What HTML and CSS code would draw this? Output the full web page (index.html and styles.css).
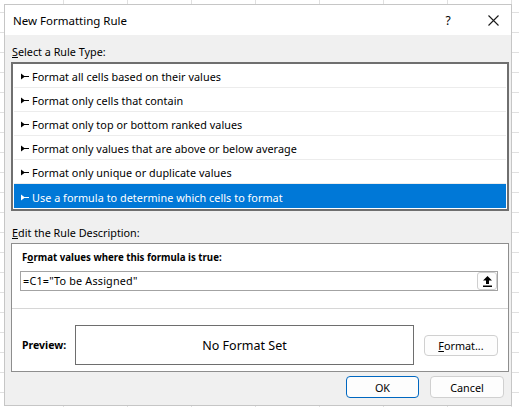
FILE: index.html
```html
<!DOCTYPE html>
<html>
<head>
<meta charset="utf-8">
<link rel="stylesheet" href="styles.css">
</head>
<body>
<div class="dialog">
  <div class="titlebar">
    <span class="title">New Formatting Rule</span>
    <span class="help">?</span>
    <span class="close"><svg width="11" height="11" viewBox="0 0 11 11"><path d="M0.5 0.5 L10.5 10.5 M10.5 0.5 L0.5 10.5" stroke="#1a1a1a" stroke-width="1.1" fill="none"/></svg></span>
  </div>
  <div class="label l1"><u>S</u>elect a Rule Type:</div>
  <ul class="list">
    <li><svg class="pin" width="8" height="7" viewBox="0 0 8 7"><path d="M0 0.5 L4 3.5 L0 6.5 Z M0 3 H8 V4 H0 Z"/></svg>Format all cells based on their values</li>
    <li><svg class="pin" width="8" height="7" viewBox="0 0 8 7"><path d="M0 0.5 L4 3.5 L0 6.5 Z M0 3 H8 V4 H0 Z"/></svg>Format only cells that contain</li>
    <li><svg class="pin" width="8" height="7" viewBox="0 0 8 7"><path d="M0 0.5 L4 3.5 L0 6.5 Z M0 3 H8 V4 H0 Z"/></svg>Format only top or bottom ranked values</li>
    <li><svg class="pin" width="8" height="7" viewBox="0 0 8 7"><path d="M0 0.5 L4 3.5 L0 6.5 Z M0 3 H8 V4 H0 Z"/></svg>Format only values that are above or below average</li>
    <li><svg class="pin" width="8" height="7" viewBox="0 0 8 7"><path d="M0 0.5 L4 3.5 L0 6.5 Z M0 3 H8 V4 H0 Z"/></svg>Format only unique or duplicate values</li>
    <li class="sel"><svg class="pin" width="8" height="7" viewBox="0 0 8 7"><path d="M0 0.5 L4 3.5 L0 6.5 Z M0 3 H8 V4 H0 Z"/></svg>Use a formula to determine which cells to format</li>
  </ul>
  <div class="label l2"><u>E</u>dit the Rule Description:</div>
  <div class="group">
    <div class="top">
      <div class="bold cond">F<u>o</u>rmat values where this formula is true:</div>
      <div class="input">
        <span class="formula">=C1="To be Assigned"</span>
        <span class="ref"><svg width="9" height="11" viewBox="0 0 9 11"><path d="M4.5 0 L9 4.5 L6 4.5 L6 8 L3 8 L3 4.5 L0 4.5 Z M0 9.6 H9 V11 H0 Z" fill="#000"/></svg></span>
      </div>
    </div>
    <div class="preview-row">
      <span class="bold plabel">Preview:</span>
      <div class="preview">No Format Set</div>
      <span class="btn fmt"><u>F</u>ormat...</span>
    </div>
  </div>
  <div class="actions">
    <span class="btn ok">OK</span>
    <span class="btn cancel">Cancel</span>
  </div>
</div>
</body>
</html>
```
FILE: styles.css
```css
html, body {
  margin: 0;
  padding: 0;
}
body {
  width: 519px;
  height: 407px;
  overflow: hidden;
  background-color: #ffffff;
  background-image:
    linear-gradient(#e0e0e0 1px, transparent 1px),
    linear-gradient(90deg, #e0e0e0 1px, transparent 1px);
  background-size: 64px 20px, 64px 20px;
  background-position: 0 12px, 63px 0;
  font-family: "Noto Sans", "Open Sans", sans-serif;
  color: #000;
}
.dialog {
  box-sizing: border-box;
  margin: 4px 0 0 4px;
  width: 508px;
  height: 402px;
  border: 1px solid #c6c6c6;
  background: #f0f0f0;
  display: flex;
  flex-direction: column;
}
.titlebar {
  height: 30px;
  flex: none;
  background: #ffffff;
  display: flex;
  align-items: center;
}
.title {
  flex: 1;
  padding-left: 8px;
  font-size: 11.5px;
}
.help {
  width: 30px;
  text-align: center;
  font-size: 12px;
  margin-right: 12px;
}
.close {
  width: 36px;
  display: flex;
  justify-content: center;
}
.label {
  font-size: 10.8px;
  line-height: 16px;
  padding-left: 7px;
}
.l1 { margin-top: 9px; }
.l2 { margin-top: 14px; }
.list {
  list-style: none;
  margin: 2px 0 0 6px;
  padding: 0 1px 1px;
  width: 498px;
  box-sizing: border-box;
  border: 2px solid #6f6f6f;
  background: #ffffff;
}
.list li {
  box-sizing: border-box;
  height: 24px;
  padding: 2px 0 0 7px;
  border-bottom: 1px solid #ececec;
  display: flex;
  align-items: center;
  gap: 3px;
  font-size: 10.8px;
  line-height: 21px;
  letter-spacing: 0.05px;
  white-space: nowrap;
}
.list li:last-child { border-bottom: none; }
.pin { flex: none; fill: #000; }
.list li.sel {
  background: #0078d7;
  color: #ffffff;
}
.list li.sel .pin { fill: #ffffff; }
.group {
  margin: 2px 0 0 6px;
  width: 498px;
  box-sizing: border-box;
  border: 1px solid #8e8e8e;
  background: #ffffff;
}
.top {
  padding: 6px 10px 17px 8px;
}
.bold {
  font-weight: 700;
  font-size: 10.5px;
  line-height: 16px;
}
.cond {
  font-size: 9.7px;
}
.top .bold { padding-left: 2px; }
.input {
  margin-top: 5px;
  height: 20px;
  box-sizing: border-box;
  border: 1px solid #a3a3a3;
  display: flex;
  align-items: center;
  justify-content: space-between;
  padding-left: 2px;
}
.formula {
  font-size: 10.8px;
  line-height: 18px;
  letter-spacing: 0.2px;
}
.ref {
  box-sizing: border-box;
  width: 20px;
  height: 18px;
  border: 1px solid #cfcfcf;
  border-radius: 3px;
  background: #fdfdfd;
  display: flex;
  align-items: center;
  justify-content: center;
}
.preview-row {
  border-top: 1px solid #d6d6d6;
  padding: 16px 10px 6px 10px;
  display: flex;
  align-items: center;
}
.plabel {
  width: 53px;
  flex: none;
}
.preview {
  box-sizing: border-box;
  width: 339px;
  height: 40px;
  border: 1px solid #6e6e6e;
  display: flex;
  align-items: center;
  justify-content: center;
  font-size: 12.5px;
  margin-right: 10px;
}
.btn {
  box-sizing: border-box;
  display: flex;
  align-items: center;
  justify-content: center;
  border: 1px solid #d0d0d0;
  border-radius: 4px;
  background: #fdfdfd;
  font-size: 10.8px;
}
.fmt {
  width: 74px;
  height: 21px;
}
.actions {
  margin-top: 4px;
  padding-right: 7px;
  display: flex;
  justify-content: flex-end;
  gap: 11px;
}
.ok {
  width: 73px;
  height: 22px;
  border-color: #0067c0;
}
.cancel {
  width: 74px;
  height: 22px;
}
```
